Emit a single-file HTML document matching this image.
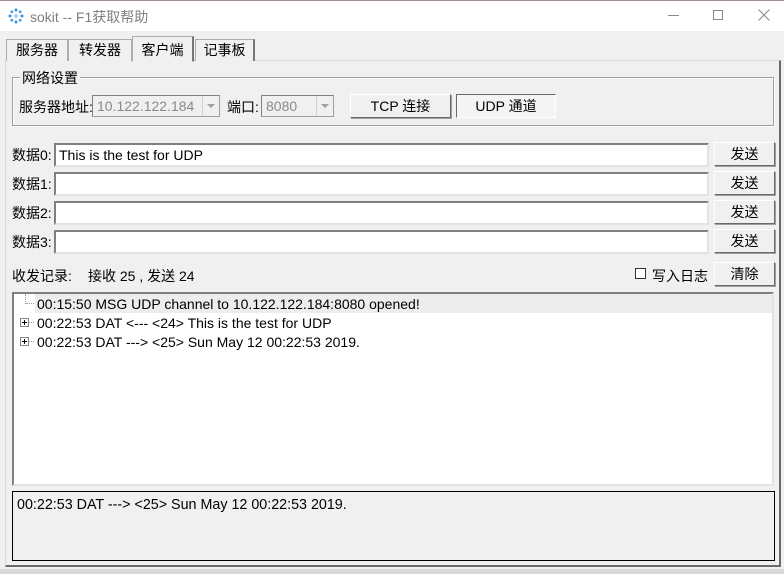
<!DOCTYPE html>
<html><head><meta charset="utf-8"><style>
*{box-sizing:border-box;margin:0;padding:0}
body{width:784px;height:574px;background:#f0f0f0;font-family:"Liberation Sans","Noto Sans CJK SC",sans-serif;font-size:14px;color:#000;position:relative;overflow:hidden}
.a{position:absolute;white-space:nowrap}
.title{left:0;top:0;width:784px;height:31px;background:#fff;border-top:1px solid #a09090}
.tab{top:39px;height:22px;border:1px solid #adadad;border-bottom:none;background:#f0f0f0;text-align:center;line-height:20px;font-size:14px}
.panel{left:5px;top:60px;width:776px;height:507px;border:1px solid #d9d9d9;border-right:2px solid #6b6b6b;border-bottom:2px solid #6b6b6b;background:#f0f0f0}
.grp{left:12px;top:77px;width:762px;height:49px;border:1px solid #a0a0a0;box-shadow:inset 1px 1px 0 #fff,1px 1px 0 #fff}
.combo{height:22px;border:1px solid #a0a0a0;border-top-color:#808080;border-left-color:#808080;background:#f0f0f0;color:#8a8a8a;padding-left:4px;line-height:20px;font-size:14px}
.combo .ar{position:absolute;right:0;top:0;width:17px;height:20px;border-left:1px solid #d0d0d0}
.combo .ar:after{content:"";position:absolute;left:4px;top:8px;border-left:4px solid transparent;border-right:4px solid transparent;border-top:4px solid #a0a0a0}
.btn{height:24px;background:#f0f0f0;border:1px solid #fff;border-right-color:#696969;border-bottom-color:#696969;box-shadow:1px 1px 0 #a0a0a0;text-align:center;line-height:22px;font-size:14px}
.inp{left:54px;width:655px;height:24px;background:#fff;border:2px solid #808080;border-right-color:#e3e3e3;border-bottom-color:#e3e3e3;padding-left:3px;line-height:20px;font-size:14px}
.lbl{left:12px;font-size:14px}
.plus{width:9px;height:9px;border:1px solid #8a8a8a;background:#fff}
.plus:before{content:"";position:absolute;left:1px;top:3px;width:5px;height:1px;background:#000}
.plus:after{content:"";position:absolute;left:3px;top:1px;width:1px;height:5px;background:#000}
</style></head><body>
<div class="a title"></div>
<svg class="a" style="left:8px;top:8px" width="16" height="16" viewBox="0 0 16 16">
<g fill="#3a8fe0"><circle cx="8" cy="2" r="1.5"/><circle cx="8" cy="14" r="1.5"/><circle cx="2" cy="8" r="1.5"/><circle cx="14" cy="8" r="1.5"/><circle cx="3.8" cy="3.8" r="1.3"/><circle cx="12.2" cy="3.8" r="1.3"/><circle cx="3.8" cy="12.2" r="1.3"/><circle cx="12.2" cy="12.2" r="1.3"/><circle cx="8" cy="8" r="1.6" fill="#8cc0f0"/></g></svg>
<div class="a" style="left:30px;top:7px;color:#808080;font-size:14px">sokit -- F1获取帮助</div>
<div class="a" style="left:668px;top:15px;width:11px;height:1px;background:#888"></div>
<div class="a" style="left:713px;top:10px;width:10px;height:10px;border:1px solid #888"></div>
<svg class="a" style="left:758px;top:9px" width="12" height="12"><path d="M0.5 0.5L11.5 11.5M11.5 0.5L0.5 11.5" stroke="#888" stroke-width="1"/></svg>

<div class="a panel"></div>
<div class="a tab" style="left:6px;width:62px;">服务器</div>
<div class="a tab" style="left:68px;width:64px;">转发器</div>
<div class="a tab" style="left:132px;top:36px;height:26px;width:62px;border-bottom:1px solid #f0f0f0;line-height:26px;border-right:2px solid #777">客户端</div>
<div class="a tab" style="left:195px;width:60px;border-right:2px solid #777">记事板</div>

<div class="a grp"></div>
<div class="a" style="left:20px;top:68px;background:#f0f0f0;padding:0 2px">网络设置</div>
<div class="a lbl" style="left:19px;top:97px">服务器地址:</div>
<div class="a combo" style="left:92px;top:95px;width:128px">10.122.122.184<span class="ar"></span></div>
<div class="a" style="left:227px;top:97px">端口:</div>
<div class="a combo" style="left:261px;top:95px;width:73px">8080<span class="ar"></span></div>
<div class="a btn" style="left:350px;top:94px;width:101px">TCP 连接</div>
<div class="a btn" style="left:456px;top:94px;width:100px;border-color:#696969 #fff #fff #696969;box-shadow:none;background:#f4f4f4">UDP 通道</div>

<div class="a lbl" style="top:145px">数据0:</div>
<div class="a inp" style="top:143px">This is the test for UDP</div>
<div class="a btn" style="left:714px;top:142px;width:61px">发送</div>
<div class="a lbl" style="top:174px">数据1:</div>
<div class="a inp" style="top:172px"></div>
<div class="a btn" style="left:714px;top:171px;width:61px">发送</div>
<div class="a lbl" style="top:203px">数据2:</div>
<div class="a inp" style="top:201px"></div>
<div class="a btn" style="left:714px;top:200px;width:61px">发送</div>
<div class="a lbl" style="top:232px">数据3:</div>
<div class="a inp" style="top:230px"></div>
<div class="a btn" style="left:714px;top:229px;width:61px">发送</div>

<div class="a" style="left:12px;top:266px">收发记录:</div>
<div class="a" style="left:88px;top:266px">接收 25 , 发送 24</div>
<div class="a" style="left:635px;top:268px;width:11px;height:11px;border:1px solid #333;background:#fff"></div>
<div class="a" style="left:652px;top:266px">写入日志</div>
<div class="a btn" style="left:714px;top:262px;width:61px">清除</div>

<div class="a" style="left:12px;top:292px;width:762px;height:194px;background:#fff;border:2px solid #808080;border-right-color:#e3e3e3;border-bottom-color:#e3e3e3"></div>
<div class="a" style="left:35px;top:294px;width:737px;height:19px;background:#ededed"></div>
<div class="a" style="left:25px;top:294px;width:1px;height:10px;border-left:1px dotted #a0a0a0"></div>
<div class="a" style="left:26px;top:303px;width:8px;border-top:1px dotted #a0a0a0"></div>
<div class="a" style="left:37px;top:296px;font-size:14px">00:15:50 MSG UDP channel to 10.122.122.184:8080 opened!</div>
<div class="a plus" style="left:20px;top:318px"></div>
<div class="a" style="left:29px;top:322px;width:5px;border-top:1px dotted #a0a0a0"></div>
<div class="a" style="left:37px;top:315px;font-size:14px">00:22:53 DAT &lt;--- &lt;24&gt; This is the test for UDP</div>
<div class="a plus" style="left:20px;top:337px"></div>
<div class="a" style="left:29px;top:341px;width:5px;border-top:1px dotted #a0a0a0"></div>
<div class="a" style="left:37px;top:334px;font-size:14px">00:22:53 DAT ---&gt; &lt;25&gt; Sun May 12 00:22:53 2019.</div>

<div class="a" style="left:12px;top:491px;width:763px;height:70px;border:1px solid #000;background:#f0f0f0"></div>
<div class="a" style="left:17px;top:497px;font-size:14.3px">00:22:53 DAT ---&gt; &lt;25&gt; Sun May 12 00:22:53 2019.</div>
<div class="a" style="left:0;top:569px;width:784px;height:5px;background:#d8d8d8"></div>
</body></html>
